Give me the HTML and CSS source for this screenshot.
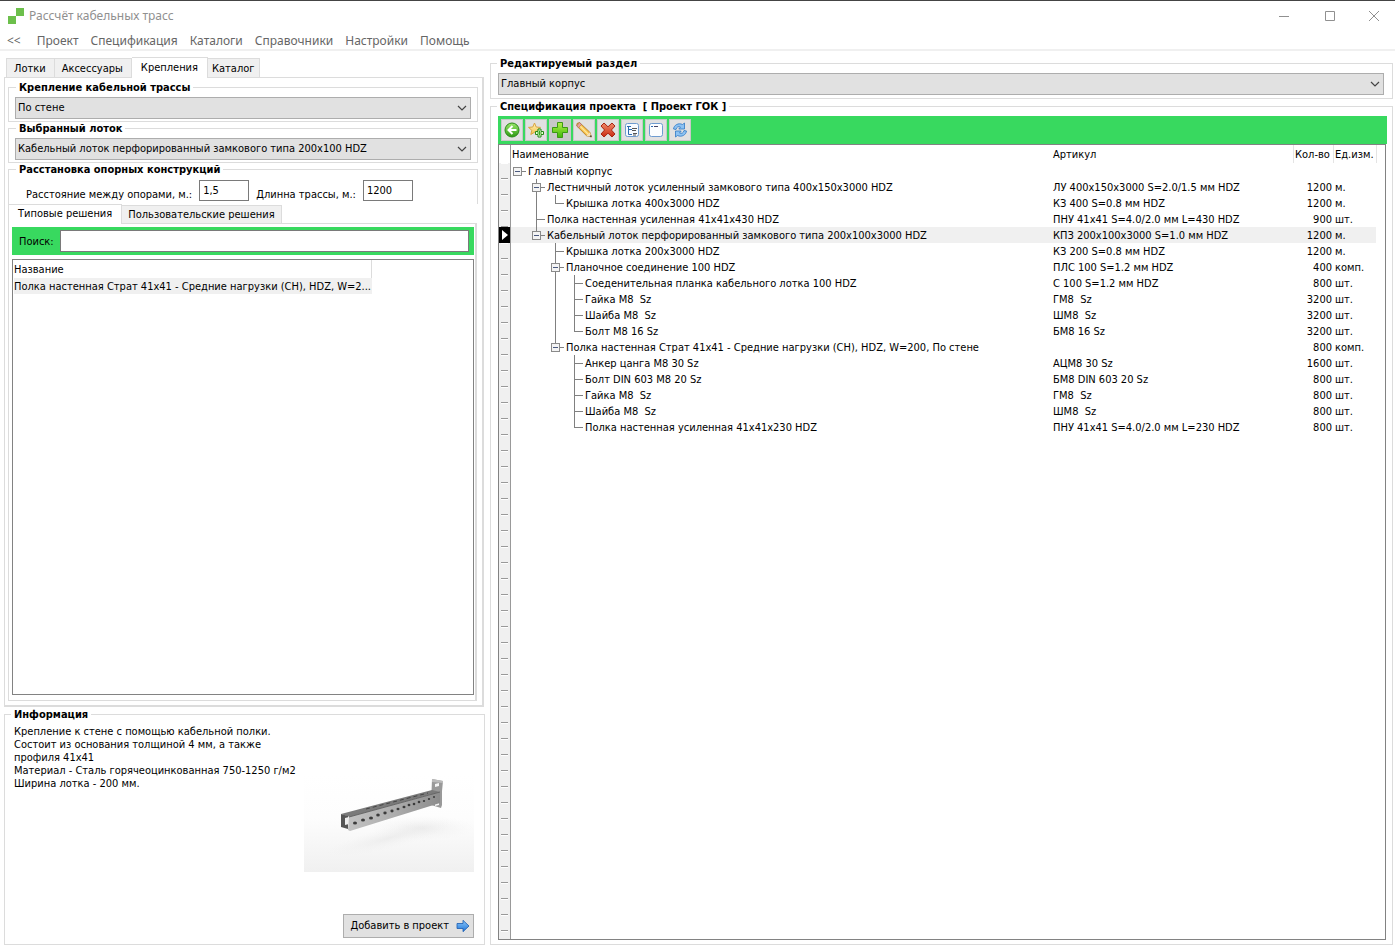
FILE: index.html
```html
<!DOCTYPE html>
<html lang="ru">
<head>
<meta charset="utf-8">
<title>Рассчёт кабельных трасс</title>
<link rel="stylesheet" href="styles.css">
</head>
<body>
<svg class="defs" width="0" height="0" aria-hidden="true">
  <defs>
    <linearGradient id="gGreen" x1="0" y1="0" x2="0" y2="1"><stop offset="0" stop-color="#9be86a"/><stop offset="1" stop-color="#2c9a12"/></linearGradient>
    <linearGradient id="gPlus" x1="0" y1="0" x2="0" y2="1"><stop offset="0" stop-color="#b4f04a"/><stop offset="1" stop-color="#3fb90a"/></linearGradient>
    <linearGradient id="gStar" x1="0" y1="0" x2="0" y2="1"><stop offset="0" stop-color="#fff3b8"/><stop offset="1" stop-color="#f3c24a"/></linearGradient>
    <linearGradient id="gRed" x1="0" y1="0" x2="0" y2="1"><stop offset="0" stop-color="#f08a6a"/><stop offset="1" stop-color="#c92a12"/></linearGradient>
    <linearGradient id="gBlue" x1="0" y1="0" x2="0" y2="1"><stop offset="0" stop-color="#8cc8fa"/><stop offset="1" stop-color="#1f74d8"/></linearGradient>
    <symbol id="chevron" viewBox="0 0 10 10"><path d="M1 3l4 4 4-4" fill="none" stroke="#444" stroke-width="1.2"/></symbol>
  </defs>
</svg>

<header class="titlebar">
  <svg class="logo" viewBox="0 0 16 16" aria-hidden="true"><path d="M8 0h8v8H8zM0 8h8v8H0z" fill="#6cbf4b"/></svg>
  <h1 class="title">Рассчёт кабельных трасс</h1>
  <div class="window-buttons">
    <button type="button" aria-label="Свернуть"><svg viewBox="0 0 12 12"><path d="M1 6.500h10"/></svg></button>
    <button type="button" aria-label="Развернуть"><svg viewBox="0 0 12 12"><path d="M1.500 1.500h9v9h-9z"/></svg></button>
    <button type="button" aria-label="Закрыть"><svg viewBox="0 0 12 12"><path d="M1 1l10 10M11 1L1 11"/></svg></button>
  </div>
</header>
<nav class="menu">
  <button type="button" class="menu-back">&lt;&lt;</button>
  <button type="button">Проект</button>
  <button type="button">Спецификация</button>
  <button type="button">Каталоги</button>
  <button type="button">Справочники</button>
  <button type="button">Настройки</button>
  <button type="button">Помощь</button>
</nav>

<main class="workspace">
  <div class="left">
    <div class="tabs" role="tablist">
      <button type="button" role="tab" class="tab">Лотки</button>
      <button type="button" role="tab" class="tab">Аксессуары</button>
      <button type="button" role="tab" class="tab active" aria-selected="true">Крепления</button>
      <button type="button" role="tab" class="tab">Каталог</button>
    </div>
    <section class="page">
      <fieldset class="group">
        <legend>Крепление кабельной трассы</legend>
        <div class="combo"><select aria-label="Крепление кабельной трассы"><option>По стене</option></select><svg><use href="#chevron"/></svg></div>
      </fieldset>
      <fieldset class="group">
        <legend>Выбранный лоток</legend>
        <div class="combo"><select aria-label="Выбранный лоток"><option>Кабельный лоток перфорированный замкового типа 200x100 HDZ</option></select><svg><use href="#chevron"/></svg></div>
      </fieldset>
      <fieldset class="group spacing">
        <legend>Расстановка опорных конструкций</legend>
        <div class="fields">
          <label for="step">Расстояние между опорами, м.:</label>
          <input id="step" type="text" value="1,5">
          <label for="length">Длинна трассы, м.:</label>
          <input id="length" type="text" value="1200">
        </div>
      </fieldset>
      <div class="tabs inner" role="tablist">
        <button type="button" role="tab" class="tab active" aria-selected="true">Типовые решения</button>
        <button type="button" role="tab" class="tab">Пользовательские решения</button>
      </div>
      <div class="solutions">
        <div class="search">
          <label for="search">Поиск:</label>
          <input id="search" type="text">
        </div>
        <div class="listbox">
          <table class="list">
            <thead><tr><th>Название</th></tr></thead>
            <tbody><tr><td>Полка настенная Страт 41x41 - Средние нагрузки (СН), HDZ, W=2...</td></tr></tbody>
          </table>
        </div>
      </div>
    </section>

    <fieldset class="group info">
      <legend>Информация</legend>
      <div class="info-body">
        <p>Крепление к стене с помощью кабельной полки.<br>Состоит из основания толщиной 4 мм, а также<br>профиля 41x41<br>Материал - Сталь горячеоцинкованная 750-1250 г/м2<br>Ширина лотка - 200 мм.</p>
        <svg class="photo" viewBox="0 0 170 98" role="img" aria-label="Кабельная полка">
          <defs>
            <linearGradient id="floor" x1="0" y1="0" x2="0" y2="1"><stop offset="0" stop-color="#fff"/><stop offset=".45" stop-color="#fdfdfd"/><stop offset="1" stop-color="#f0f0f0"/></linearGradient>
            <radialGradient id="shade"><stop offset="0" stop-color="#dcdcdc"/><stop offset="1" stop-color="#eee" stop-opacity="0"/></radialGradient>
            <linearGradient id="steel" x1="0" y1="0" x2="1" y2="0"><stop offset="0" stop-color="#c2c2c2"/><stop offset=".5" stop-color="#adadad"/><stop offset="1" stop-color="#8c8c8c"/></linearGradient>
          </defs>
          <path d="M0 0h170v98H0z" fill="url(#floor)"/>
          <ellipse cx="118" cy="54" rx="52" ry="13" fill="url(#shade)" opacity=".45"/>
          <ellipse cx="85" cy="64" rx="65" ry="11" fill="url(#shade)" opacity=".4" transform="rotate(-14 85 64)"/>
          <path d="M128 5l11 2-1 10v14l-1 3-10-3z" fill="#999"/>
          <path d="M128 5l11 2v2l-11-1z" fill="#bbb"/>
          <path d="M131 10l4-1v3l-4 1zM131 29l4-1v3l-4 1z" fill="#f4f4f4"/>
          <path d="M37 40l91-24 8 2-90 25z" fill="#7a7a7a"/>
          <path d="M37 40l7 2v13l-7-2z" fill="#555"/>
          <path d="M41 44l4-1v7l-4 1z" fill="#eee"/>
          <path d="M45 43l91-25v11L46 57l-2-1z" fill="url(#steel)"/>
          <path d="M45 43l91-25" stroke="#666" fill="none"/>
          <path d="M62 35l62-16" stroke="#444" stroke-width="1" stroke-dasharray="4 3" fill="none"/>
          <g fill="#3b3b3b"><ellipse cx="51" cy="49" rx="2" ry="1.600"/><ellipse cx="59" cy="46" rx="2" ry="1.600"/><ellipse cx="67" cy="44" rx="2" ry="1.500"/><ellipse cx="74" cy="41" rx="1.800" ry="1.500"/><ellipse cx="81" cy="39" rx="1.700" ry="1.400"/><ellipse cx="88" cy="37" rx="1.600" ry="1.400"/><ellipse cx="94" cy="35" rx="1.500" ry="1.300"/><ellipse cx="100" cy="33" rx="1.500" ry="1.300"/><ellipse cx="105" cy="31" rx="1.400" ry="1.200"/><ellipse cx="110" cy="30" rx="1.300" ry="1.200"/><ellipse cx="115" cy="28" rx="1.300" ry="1.200"/><ellipse cx="120" cy="27" rx="1.200" ry="1.100"/><ellipse cx="125" cy="25" rx="1.200" ry="1.100"/><ellipse cx="130" cy="23" rx="1" ry="1"/></g>
        </svg>
      </div>
      <button type="button" class="add">Добавить в проект
        <svg viewBox="0 0 14 14" aria-hidden="true"><path d="M1 4.500h6V1.300L13 7l-6 5.700V9.500H1z" fill="url(#gBlue)" stroke="#1b5cb0" stroke-width=".8"/></svg>
      </button>
    </fieldset>
  </div>

  <div class="right">
    <fieldset class="group">
      <legend>Редактируемый раздел</legend>
      <div class="combo"><select aria-label="Редактируемый раздел"><option>Главный корпус</option></select><svg><use href="#chevron"/></svg></div>
    </fieldset>
    <fieldset class="group spec">
      <legend>Спецификация проекта&nbsp; [ Проект ГОК ]</legend>
      <div class="toolbar">
        <button type="button" aria-label="Назад"><svg viewBox="0 0 16 16"><circle cx="8" cy="8" r="7" fill="url(#gGreen)" stroke="#2c8a1c"/><path d="M8.500 4L4.500 8l4 4M5 8h7.500" fill="none" stroke="#fff" stroke-width="2"/></svg></button>
        <button type="button" aria-label="В избранное"><svg viewBox="0 0 16 16"><path d="M6.500 1l1.700 4 4.300.4-3.300 2.900 1 4.200-3.700-2.200-3.700 2.200 1-4.200L.5 5.400 4.800 5z" fill="url(#gStar)" stroke="#d9a441"/><path d="M10 7h3v2.500h2.500v3H13V15h-3v-2.500H7.500v-3H10z" fill="#e8ffd8" stroke="#258a16"/><path d="M11.500 8.500v5M9 11h5" stroke="#37a81e" stroke-width="1.200"/></svg></button>
        <button type="button" class="pressed" aria-label="Добавить"><svg viewBox="0 0 16 16"><path d="M5.500.5h5v5h5v5h-5v5h-5v-5h-5v-5h5z" fill="url(#gPlus)" stroke="#3b9a12"/></svg></button>
        <button type="button" aria-label="Изменить"><svg viewBox="0 0 16 16"><path d="M1 1.500L3.500.5l10.300 9.700L15.500 15l-5-1.300L.8 4z" fill="#f7c04a" stroke="#a87420" stroke-width=".8"/><path d="M3 3l9 9" stroke="#fde79a" stroke-width="1.400"/><path d="M.8 3.900L3.500.5l2 1.900-2.900 3.400z" fill="#e9a0a0" stroke="#a86a5a" stroke-width=".6"/><path d="M10.500 13.700l3.300-3.500L15.500 15z" fill="#f5dfb5"/><path d="M13.500 14.500l1.500-1.400.6 2z" fill="#222"/></svg></button>
        <button type="button" aria-label="Удалить"><svg viewBox="0 0 16 16"><path d="M4 1l4 3.800L12 1l3 3-3.600 4L15 12l-3 3-4-3.800L4 15l-3-3 3.600-4L1 4z" fill="url(#gRed)" stroke="#a82412"/></svg></button>
        <button type="button" aria-label="Развернуть всё"><svg viewBox="0 0 16 16"><rect x="1.500" y="1.500" width="13" height="13" rx="2" fill="#f6faff" stroke="#6d9bd0"/><path d="M3 4.500h4M4.500 4.500v8M4.500 7.500H8M4.500 12.500H8" stroke="#2c6ab0" fill="none"/><path d="M8 6.500h5M8 8.500h4M9 11.500h4M9 13h3" stroke="#555" fill="none"/></svg></button>
        <button type="button" aria-label="Свернуть всё"><svg viewBox="0 0 16 16"><rect x="1.500" y="1.500" width="13" height="13" rx="2" fill="#fbfdff" stroke="#6d9bd0"/><path d="M3 4.500h2" stroke="#2c6ab0"/><path d="M6 4.500h4" stroke="#446"/></svg></button>
        <button type="button" aria-label="Обновить"><svg viewBox="0 0 16 16"><path d="M1.500 7C2 3 6.500.5 10.500 2.500L12.500 1v6H6.800l1.700-2C6.500 4 4.500 5 4 7.500z" fill="#8cc2f2" stroke="#2f78c4" stroke-width=".8"/><path d="M14.500 9c-.5 4-5 6.500-9 4.500L3.500 15V9h5.700l-1.700 2c2 1 4 0 4.500-2.500z" fill="#8cc2f2" stroke="#2f78c4" stroke-width=".8"/></svg></button>
      </div>
      <div class="treebox">
        <table class="tree">
          <colgroup><col class="c-mark"><col class="c-name"><col><col class="c-qty"><col class="c-unit"><col class="c-rest"></colgroup>
          <thead><tr><th></th><th>Наименование</th><th>Артикул</th><th class="sep">Кол-во</th><th class="sep">Ед.изм.</th><th class="sep"></th></tr></thead>
          <tbody>
            <tr><td></td><td><div class="node"><i class="g"><button type="button" class="box" aria-label="Свернуть"></button></i>Главный корпус</div></td><td></td><td></td><td></td><td></td></tr>
            <tr><td></td><td><div class="node"><i class="g"></i><i class="g up down"><button type="button" class="box" aria-label="Свернуть"></button></i>Лестничный лоток усиленный замкового типа 400x150x3000 HDZ</div></td><td>ЛУ 400x150x3000 S=2.0/1.5 мм HDZ</td><td>1200</td><td>м.</td><td></td></tr>
            <tr><td></td><td><div class="node"><i class="g"></i><i class="g up down"></i><i class="g up mid"></i>Крышка лотка 400x3000 HDZ</div></td><td>КЗ 400 S=0.8 мм HDZ</td><td>1200</td><td>м.</td><td></td></tr>
            <tr><td></td><td><div class="node"><i class="g"></i><i class="g up down mid"></i>Полка настенная усиленная 41x41x430 HDZ</div></td><td>ПНУ 41x41 S=4.0/2.0 мм L=430 HDZ</td><td>900</td><td>шт.</td><td></td></tr>
            <tr class="current"><td><span class="marker"></span></td><td><div class="node"><i class="g"></i><i class="g up"><button type="button" class="box" aria-label="Свернуть"></button></i>Кабельный лоток перфорированный замкового типа 200x100x3000 HDZ</div></td><td>КПЗ 200x100x3000 S=1.0 мм HDZ</td><td>1200</td><td>м.</td><td></td></tr>
            <tr><td></td><td><div class="node"><i class="g"></i><i class="g"></i><i class="g up down mid"></i>Крышка лотка 200x3000 HDZ</div></td><td>КЗ 200 S=0.8 мм HDZ</td><td>1200</td><td>м.</td><td></td></tr>
            <tr><td></td><td><div class="node"><i class="g"></i><i class="g"></i><i class="g up down"><button type="button" class="box" aria-label="Свернуть"></button></i>Планочное соединение 100 HDZ</div></td><td>ПЛС 100 S=1.2 мм HDZ</td><td>400</td><td>комп.</td><td></td></tr>
            <tr><td></td><td><div class="node"><i class="g"></i><i class="g"></i><i class="g up down"></i><i class="g up down mid"></i>Соеденительная планка кабельного лотка 100 HDZ</div></td><td>С 100 S=1.2 мм HDZ</td><td>800</td><td>шт.</td><td></td></tr>
            <tr><td></td><td><div class="node"><i class="g"></i><i class="g"></i><i class="g up down"></i><i class="g up down mid"></i>Гайка М8&nbsp; Sz</div></td><td>ГМ8&nbsp; Sz</td><td>3200</td><td>шт.</td><td></td></tr>
            <tr><td></td><td><div class="node"><i class="g"></i><i class="g"></i><i class="g up down"></i><i class="g up down mid"></i>Шайба М8&nbsp; Sz</div></td><td>ШМ8&nbsp; Sz</td><td>3200</td><td>шт.</td><td></td></tr>
            <tr><td></td><td><div class="node"><i class="g"></i><i class="g"></i><i class="g up down"></i><i class="g up mid"></i>Болт М8 16 Sz</div></td><td>БМ8 16 Sz</td><td>3200</td><td>шт.</td><td></td></tr>
            <tr><td></td><td><div class="node"><i class="g"></i><i class="g"></i><i class="g up"><button type="button" class="box" aria-label="Свернуть"></button></i>Полка настенная Страт 41x41 - Средние нагрузки (СН), HDZ, W=200, По стене</div></td><td></td><td>800</td><td>комп.</td><td></td></tr>
            <tr><td></td><td><div class="node"><i class="g"></i><i class="g"></i><i class="g"></i><i class="g up down mid"></i>Анкер цанга М8 30 Sz</div></td><td>АЦМ8 30 Sz</td><td>1600</td><td>шт.</td><td></td></tr>
            <tr><td></td><td><div class="node"><i class="g"></i><i class="g"></i><i class="g"></i><i class="g up down mid"></i>Болт DIN 603 М8 20 Sz</div></td><td>БМ8 DIN 603 20 Sz</td><td>800</td><td>шт.</td><td></td></tr>
            <tr><td></td><td><div class="node"><i class="g"></i><i class="g"></i><i class="g"></i><i class="g up down mid"></i>Гайка М8&nbsp; Sz</div></td><td>ГМ8&nbsp; Sz</td><td>800</td><td>шт.</td><td></td></tr>
            <tr><td></td><td><div class="node"><i class="g"></i><i class="g"></i><i class="g"></i><i class="g up down mid"></i>Шайба М8&nbsp; Sz</div></td><td>ШМ8&nbsp; Sz</td><td>800</td><td>шт.</td><td></td></tr>
            <tr><td></td><td><div class="node"><i class="g"></i><i class="g"></i><i class="g"></i><i class="g up mid"></i>Полка настенная усиленная 41x41x230 HDZ</div></td><td>ПНУ 41x41 S=4.0/2.0 мм L=230 HDZ</td><td>800</td><td>шт.</td><td></td></tr>
          </tbody>
        </table>
      </div>
    </fieldset>
  </div>
</main>
</body>
</html>
```
FILE: styles.css
```css
:root {
  --line: #dcdcdc;
  --frame: #828282;
  --green: #38d95f;
  --face: #e1e1e1;
  --ui: "DejaVu Sans Condensed", "DejaVu Sans", sans-serif;
  --chrome: "Noto Sans", "Open Sans", sans-serif;
}
* { box-sizing: border-box; }
body {
  margin: 0;
  min-height: 100vh;
  display: flex;
  flex-direction: column;
  background: #fff;
  border-top: 1px solid #444;
  color: #000;
  font: 11px/14px var(--ui);
}
button, input, select { font: inherit; color: inherit; margin: 0; }
.defs { position: absolute; }

.titlebar { display: flex; align-items: center; height: 29px; padding-left: 8px; color: #909090; }
.logo { width: 16px; height: 16px; margin-right: 5px; }
.title { margin: 0; font: 12px/16px var(--chrome); }
.window-buttons { display: flex; margin-left: auto; }
.window-buttons button { width: 46px; height: 28px; padding: 0; border: 0; background: none; }
.window-buttons button:last-child { width: 42px; }
.window-buttons svg { width: 12px; height: 12px; display: block; margin: auto; fill: none; stroke: #909090; }

.menu { display: flex; align-items: center; gap: 12px; height: 21px; padding: 2px 0 0 7px; border-bottom: 2px solid #f0f0f0; }
.menu button { padding: 0; border: 0; background: none; color: #666; font: 12px/18px var(--chrome); }
.menu .menu-back { margin-right: 4px; }

.workspace {
  flex: 1;
  display: grid;
  grid-template-columns: minmax(0, 481fr) minmax(0, 903fr);
  gap: 5px;
  padding: 6px 2px 1px 4px;
}
.left, .right { display: flex; flex-direction: column; }

.tabs { display: flex; align-items: flex-end; padding-left: 2px; }
.tab { height: 19px; padding: 1px 8px 0 7px; border: 1px solid var(--line); border-bottom: 0; background: #f0f0f0; white-space: nowrap; }
.tab + .tab { border-left: 0; }
.tab:last-child { padding: 1px 4px 0; }
.tab.active { height: 21px; margin-bottom: -1px; padding: 0 9px 1px; background: #fff; z-index: 1; }
.page {
  flex: 1;
  display: flex;
  flex-direction: column;
  margin-right: 1px;
  padding: 3px 4px 4px 3px;
  border: 1px solid var(--line);
  border-right-width: 2px;
  border-bottom-width: 2px;
}

.group { min-width: 0; margin: 0; padding: 3px 6px 2px 6px; border: 1px solid var(--line); }
.group legend { height: 13px; margin-left: 1px; padding: 0 3px; font-weight: bold; line-height: 13px; }
.combo { display: grid; align-items: center; }
.combo > * { grid-area: 1 / 1; }
.combo select { appearance: none; width: 100%; height: 22px; padding: 0 20px 0 2px; border: 1px solid #adadad; border-radius: 0; background: var(--face); }
.combo svg { width: 10px; height: 10px; justify-self: end; margin-right: 4px; pointer-events: none; }

.spacing { border-bottom: 0; padding-top: 2px; }
.fields { display: flex; align-items: center; gap: 7px; padding-left: 11px; }
.fields input { width: 50px; height: 21px; }
.fields label { padding-top: 10px; }
input { padding: 0 3px; border: 1px solid #7a7a7a; background: #fff; }

.inner { padding-left: 0; }
.inner .tab.active { height: 20px; padding: 0 9px 1px; }
.inner .tab:last-child { height: 18px; padding: 1px 6px 0; }
.solutions {
  flex: 1;
  display: flex;
  flex-direction: column;
  gap: 4px;
  margin-right: 1px;
  padding: 3px 1px 5px 3px;
  border: 1px solid var(--line);
  border-right-width: 2px;
}
.search { display: flex; align-items: center; gap: 6px; height: 28px; padding: 0 5px 0 7px; background: var(--green); }
.search label { padding-top: 2px; }
.search input { flex: 1; min-width: 0; height: 22px; }
.listbox { flex: 1; border: 1px solid var(--frame); padding: 0 0 0 1px; }
.list { width: 78%; border-collapse: collapse; }
.list th { height: 18px; padding: 1px 0 0; border-right: 1px solid var(--line); text-align: left; font-weight: normal; }
.list td { height: 16px; padding: 2px 0 0; background: #f0f0f0; white-space: nowrap; }

.info { padding: 4px 10px 6px 9px; margin-top: 1px; }
.info legend { margin-left: -3px; }
.info-body { display: grid; padding-bottom: 42px; }
.info-body > * { grid-area: 1 / 1; }
.info p { margin: 0; line-height: 13px; }
.photo { width: 170px; height: 98px; justify-self: end; align-self: start; margin-top: 49px; }
.add { display: flex; align-items: center; gap: 7px; margin-left: auto; height: 24px; padding: 0 3px 0 6px; border: 1px solid #adadad; background: var(--face); white-space: nowrap; }
.add svg { width: 14px; height: 14px; }

.right .group { padding: 3px 8px 3px 7px; }
.right .group legend { margin-left: -1px; }
.right .spec { flex: 1; display: flex; flex-direction: column; margin-top: 1px; padding: 3px 5px 4px 7px; }
.toolbar { display: flex; gap: 2px; padding: 3px; background: var(--green); height: 28px; }
.toolbar button { width: 22px; height: 22px; padding: 2px; border: 1px solid #c8c8c8; background: var(--face); }
.toolbar .pressed { background: #c8c8c8; }
.toolbar svg { width: 16px; height: 16px; display: block; }

.treebox {
  flex: 1;
  margin-right: 1px;
  border: 1px solid var(--frame);
  background:
    linear-gradient(#999, #999) 11px 0 / 1px 100% no-repeat,
    linear-gradient(#fff, #fff) 0 0 / 11px 18px no-repeat,
    linear-gradient(90deg, #f0f0f0 2px, transparent 2px 9px, #f0f0f0 9px) 0 0 / 11px 100% no-repeat,
    linear-gradient(#fff 1px, #f0f0f0 1px 15px, #999 15px) 0 2px / 11px 16px repeat-y;
}
.tree { width: 100%; table-layout: fixed; border-collapse: separate; border-spacing: 0; }
.c-mark { width: 12px; }
.c-name { width: 541px; }
.c-qty { width: 40px; }
.c-unit { width: 43px; }
.c-rest { width: 9px; }
.tree th, .tree td { height: 16px; padding: 2px 1px 0; text-align: left; font-weight: normal; line-height: 14px; white-space: nowrap; }
.tree th { height: 18px; }
.tree .sep { border-left: 1px solid #e4e4e4; }
.tree td:nth-child(1) { padding: 0; }
.tree td:nth-child(2) { padding-top: 0; }
.tree td:nth-child(4) { text-align: right; }
.tree td:nth-child(5) { padding-left: 2px; }
.tree .current td:not(:first-child):not(:last-child) { background-color: #f0f0f0; }
.marker { display: flex; align-items: center; width: 11px; height: 16px; padding-left: 3px; background: #000; }
.marker::before { content: ""; border: 5px solid transparent; border-left: 6px solid #fff; border-right: 0; }

.node { display: flex; height: 16px; margin-left: -3px; line-height: 18px; }
.g {
  --v: #808080;
  flex: none;
  width: 19px;
  height: 16px;
  display: flex;
  align-items: center;
  padding-left: 4px;
  background-repeat: no-repeat;
}
.g.up { background-image: linear-gradient(var(--v), var(--v)); background-size: 1px 8px; background-position: 8px 0; }
.g.up.down { background-size: 1px 16px; }
.g.up.mid { background-image: linear-gradient(var(--v), var(--v)), linear-gradient(var(--v), var(--v)); background-size: 1px 8px, 9px 1px; background-position: 8px 0, 8px 8px; }
.g.up.down.mid { background-size: 1px 16px, 9px 1px; }
.g:has(.box)::after { content: ""; width: 4px; height: 1px; background: #808080; }
.box {
  width: 9px;
  height: 9px;
  padding: 0;
  border: 1px solid #8a8a8a;
  background: linear-gradient(#4b5a80, #4b5a80) center / 5px 1px no-repeat #f4f4f4;
}
```
